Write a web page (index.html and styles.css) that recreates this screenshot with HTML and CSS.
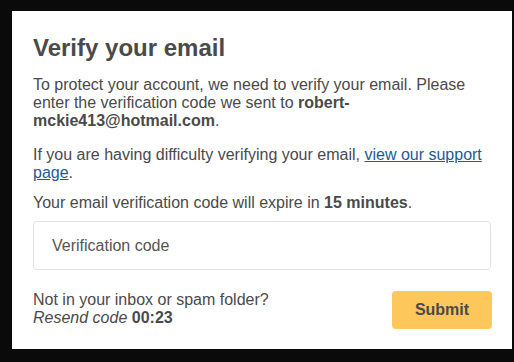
FILE: index.html
```html
<!DOCTYPE html>
<html lang="en">
<head>
<meta charset="utf-8">
<title>Verify your email</title>
<link rel="stylesheet" href="styles.css">
</head>
<body>
<div class="backdrop">
  <div class="modal">
    <h1 class="title">Verify your email</h1>
    <p class="text intro">To protect your account, we need to verify your email. Please enter the verification code we sent to <b>robert-mckie413@hotmail.com</b>.</p>
    <p class="text help">If you are having difficulty verifying your email, <a href="#" class="link">view our support page</a>.</p>
    <p class="text expire">Your email verification code will expire in <b>15 minutes</b>.</p>
    <input class="code" type="text" placeholder="Verification code">
    <div class="footer">
      <div class="resend">
        <div>Not in your inbox or spam folder?</div>
        <div><i>Resend code</i> <b>00:23</b></div>
      </div>
      <button class="submit" type="button">Submit</button>
    </div>
  </div>
</div>
</body>
</html>
```
FILE: styles.css
```css
html, body {
  margin: 0;
  padding: 0;
  background: #0a0a0a;
  width: 514px;
  height: 362px;
  overflow: hidden;
}
.backdrop {
  padding: 11px 2px 0 12px;
}
.modal {
  background: #ffffff;
  width: 500px;
  height: 338px;
  box-sizing: border-box;
  padding: 23px 21px 20px 21px;
  font-family: "Liberation Sans", Arial, sans-serif;
  color: #4a4a4a;
  display: flex;
  flex-direction: column;
}
.title {
  margin: 0;
  font-size: 24px;
  font-weight: bold;
  line-height: 27.6px;
  color: #4a4a4a;
}
.text {
  margin: 0;
  font-size: 16px;
  line-height: 18.4px;
}
.intro { margin-top: 14px; }
.help { margin-top: 15px; }
.expire { margin-top: 11px; }
.link {
  color: #1b5b98;
  text-decoration: underline;
}
.code {
  margin-top: 9px;
  height: 49px;
  box-sizing: border-box;
  border: 1px solid #e2e2e2;
  border-radius: 4px;
  padding: 0 0 0 18px;
  font-family: "Liberation Sans", Arial, sans-serif;
  font-size: 16px;
  color: #4a4a4a;
  outline: none;
}
.code::placeholder {
  color: #555555;
  opacity: 1;
}
.footer {
  margin-top: 21px;
  display: flex;
  justify-content: space-between;
  align-items: flex-start;
}
.resend {
  font-size: 16px;
  line-height: 18.4px;
}
.submit {
  width: 100px;
  height: 38px;
  margin-right: -1px;
  background: #fec75c;
  border: none;
  border-radius: 4px;
  font-family: "Liberation Sans", Arial, sans-serif;
  font-size: 16px;
  font-weight: bold;
  color: #4a4a4a;
}
```
